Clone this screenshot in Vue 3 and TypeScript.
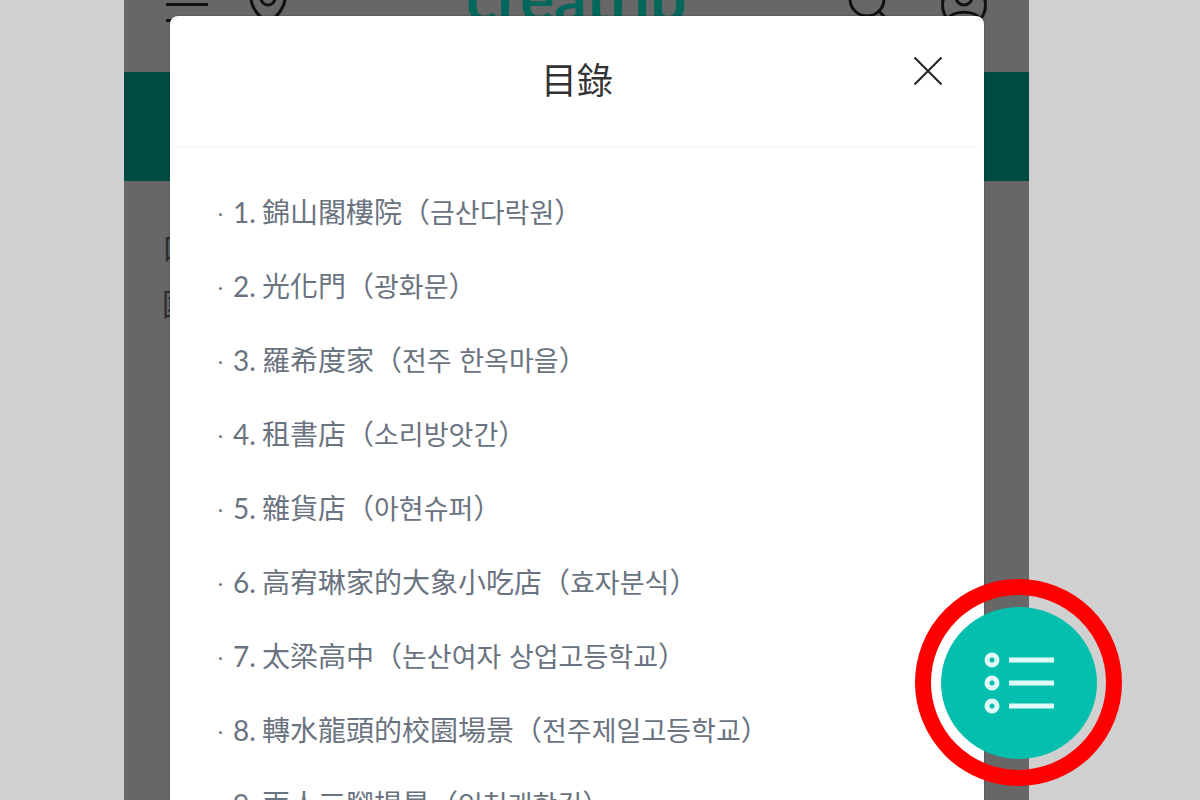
<script setup lang="ts">
interface Entry {
  id: number
  name: string
  korean: string
}

const entries: Entry[] = [
  { id: 1, name: '錦山閣樓院', korean: '금산다락원' },
  { id: 2, name: '光化門', korean: '광화문' },
  { id: 3, name: '羅希度家', korean: '전주 한옥마을' },
  { id: 4, name: '租書店', korean: '소리방앗간' },
  { id: 5, name: '雜貨店', korean: '아현슈퍼' },
  { id: 6, name: '高宥琳家的大象小吃店', korean: '효자분식' },
  { id: 7, name: '太梁高中', korean: '논산여자 상업고등학교' },
  { id: 8, name: '轉水龍頭的校園場景', korean: '전주제일고등학교' },
  { id: 9, name: '兩人三腳場景', korean: '인천개항길' },
]
</script>

<template>
  <div class="page" lang="zh-Hant">
    <div class="phone">
      <header class="topbar">
        <div class="side">
          <svg width="42" height="36" viewBox="0 0 42 36" aria-hidden="true">
            <path d="M0 2.5H42M0 18.500H42M0 34.500H42" />
          </svg>
          <svg width="40" height="52" viewBox="0 0 40 52" aria-hidden="true">
            <path d="M20 46C11 38 3 30 3 20a17 17 0 0 1 34 0C37 30 29 38 20 46Z" />
            <circle cx="20" cy="20" r="7" />
          </svg>
        </div>
        <span class="logo">creatrip</span>
        <div class="side end">
          <svg width="44" height="48" viewBox="0 0 44 48" aria-hidden="true">
            <circle cx="20" cy="19" r="17" />
            <path d="M32 31L42 42" />
          </svg>
          <svg width="46" height="48" viewBox="0 0 46 48" aria-hidden="true">
            <circle cx="23" cy="25" r="21.500" />
            <circle cx="23" cy="17" r="8" />
            <path d="M7 39C11 30 35 30 39 39" />
          </svg>
        </div>
      </header>
      <div class="band"></div>
      <div class="article">
        <p>口</p>
        <p>國</p>
      </div>

      <section class="modal" role="dialog" aria-labelledby="toc-title">
        <header class="modal-head">
          <h1 id="toc-title">目錄</h1>
          <button class="close" type="button" aria-label="關閉">
            <svg width="30" height="30" viewBox="0 0 30 30" aria-hidden="true">
              <path d="M1.500 1.500L28.500 28.500M28.500 1.500L1.500 28.500" />
            </svg>
          </button>
        </header>
        <ul class="toc">
          <li v-for="entry in entries" :key="entry.id">
            <a href="#"><span class="dot">·</span><span class="num">{{ entry.id }}.</span>{{ entry.name }}&#xFF08;<span class="korean" lang="ko">{{ entry.korean }}</span>&#xFF09;</a>
          </li>
        </ul>
      </section>
    </div>

    <div class="ring">
      <button class="fab" type="button" aria-label="目錄">
        <svg width="72" height="64" viewBox="0 0 72 64" aria-hidden="true">
          <g v-for="y in [9, 32, 55]" :key="y">
            <circle cx="9" :cy="y" r="5" />
            <path :d="`M26 ${y}H71`" />
          </g>
        </svg>
      </button>
    </div>
  </div>
</template>

<style>
body {
  margin: 0;
}
</style>

<style scoped>
.page {
  position: relative;
  box-sizing: border-box;
  height: 100vh;
  padding: 0 171px 0 124px;
  overflow: hidden;
  background: #d0d0d0;
  font-family: "Noto Sans CJK TC", "Noto Sans CJK KR", sans-serif;
}
.phone {
  position: relative;
  height: 100%;
  overflow: hidden;
  background: #676767;
}
.topbar {
  display: flex;
  align-items: center;
  box-sizing: border-box;
  height: 136px;
  margin-top: -64px;
  padding: 0 42px;
}
.side {
  display: flex;
  flex: 1;
  align-items: center;
  gap: 40px;
}
.end {
  justify-content: flex-end;
  gap: 50px;
}
.side svg {
  display: block;
  fill: none;
  stroke: #111;
  stroke-width: 3;
}
.logo {
  padding-bottom: 12px;
  color: #04675b;
  font: 700 64px/72px Lato, sans-serif;
}
.band {
  height: 109px;
  background: #004b41;
}
.article {
  padding: 37px 38px;
  color: #2c2c2c;
  font-size: 30px;
  line-height: 56px;
}
.article p {
  margin: 0;
}
.modal {
  position: absolute;
  top: 16px;
  right: 45px;
  left: 46px;
  min-height: 100%;
  border-radius: 8px;
  background: #fff;
  box-shadow: 0 0 2px rgba(0, 0, 0, 0.4);
}
.modal-head {
  position: relative;
  display: flex;
  align-items: center;
  justify-content: center;
  box-sizing: border-box;
  height: 132px;
  margin: 0 6px;
  padding-bottom: 6px;
  border-bottom: 2px solid #f7f7f7;
}
h1 {
  margin: 0;
  color: #333;
  font-size: 36px;
  font-weight: 400;
  line-height: 52px;
}
.close {
  position: absolute;
  top: 40px;
  right: 35px;
  padding: 0;
  border: 0;
  background: none;
  cursor: pointer;
}
.close svg {
  display: block;
  fill: none;
  stroke: #222;
  stroke-width: 2;
}
.toc {
  margin: 0;
  padding: 26px 47px;
  list-style: none;
}
.toc li {
  height: 74px;
  font-size: 28px;
  line-height: 74px;
  white-space: nowrap;
}
.toc a {
  color: #6a7380;
  text-decoration: none;
}
.dot,
.num {
  display: inline-block;
  font-family: Lato, sans-serif;
}
.dot {
  width: 16px;
  font-weight: 300;
}
.num {
  width: 29px;
}
.korean {
  font-family: "Noto Sans CJK KR", sans-serif;
  font-size: 27px;
}
.ring {
  position: absolute;
  right: 78px;
  bottom: 14px;
  display: flex;
  align-items: center;
  justify-content: center;
  box-sizing: border-box;
  width: 207px;
  height: 207px;
  border: 16px solid #f00;
  border-radius: 50%;
}
.fab {
  display: flex;
  align-items: center;
  justify-content: center;
  width: 156px;
  height: 152px;
  padding: 0;
  border: 0;
  border-radius: 50%;
  background: #04bfae;
  cursor: pointer;
}
.fab svg {
  fill: none;
  stroke: #e0fbf7;
  stroke-width: 5;
}
</style>
